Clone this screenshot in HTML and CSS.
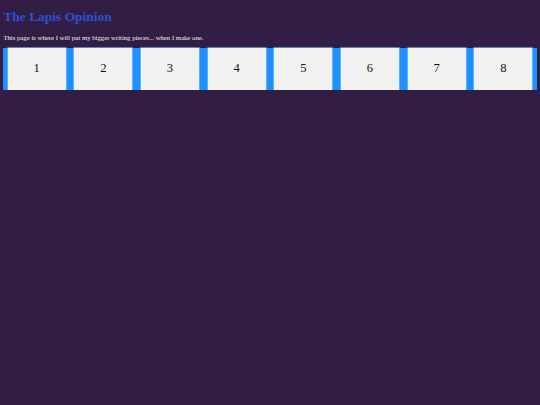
FILE: index.html
```html
<!DOCTYPE html>
<html>
<head>
<meta charset="utf-8">
<title>The Lapis Opinion</title>
<link rel="stylesheet" href="styles.css">
</head>
<body>
<h1 class="title">The Lapis Opinion</h1>
<p class="intro">This page is where I will put my bigger writing pieces... when I make one.</p>
<div class="grid">
  <div class="cell">1</div>
  <div class="cell">2</div>
  <div class="cell">3</div>
  <div class="cell">4</div>
  <div class="cell">5</div>
  <div class="cell">6</div>
  <div class="cell">7</div>
  <div class="cell">8</div>
</div>
</body>
</html>
```
FILE: styles.css
```css
html {
  background: #321e45;
}
body {
  margin: 0;
  padding: 0 3.4px;
  background: #321e45;
  font-family: "Liberation Serif", "Times New Roman", serif;
  font-size: 6.72px;
  color: #ffffff;
}
.title {
  font-size: 13.44px;
  font-weight: bold;
  color: #2e4fd8;
  margin: 0;
  padding-top: 9px;
  margin-bottom: 9px;
}
.intro {
  margin: 0 0 6.7px 0;
  color: #f2eef6;
}
.grid {
  display: grid;
  grid-template-columns: repeat(8, 1fr);
  column-gap: 8.4px;
  padding: 0 4.2px;
  background: #1e90ff;
}
.cell {
  height: 42px;
  background: #f1f1f1;
  color: #111111;
  font-size: 12.6px;
  display: flex;
  align-items: center;
  justify-content: center;
  box-shadow: 0 0 0 0.6px #8cc6ff;
}
```
